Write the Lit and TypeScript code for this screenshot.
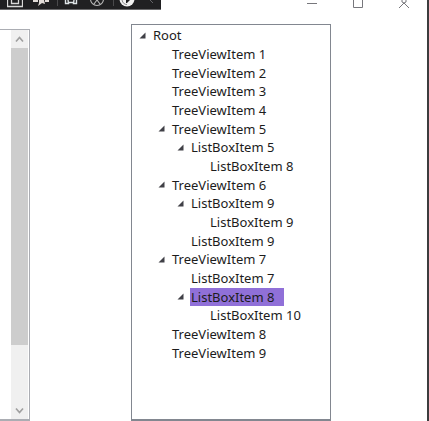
import { LitElement, html, svg, css, nothing } from "lit";
import { customElement, state } from "lit/decorators.js";
import { classMap } from "lit/directives/class-map.js";

interface TreeNode {
  label: string;
  level: number;
  open?: boolean;
}

const NODES: TreeNode[] = [
  { label: "Root", level: 0, open: true },
  { label: "TreeViewItem 1", level: 1 },
  { label: "TreeViewItem 2", level: 1 },
  { label: "TreeViewItem 3", level: 1 },
  { label: "TreeViewItem 4", level: 1 },
  { label: "TreeViewItem 5", level: 1, open: true },
  { label: "ListBoxItem 5", level: 2, open: true },
  { label: "ListBoxItem 8", level: 3 },
  { label: "TreeViewItem 6", level: 1, open: true },
  { label: "ListBoxItem 9", level: 2, open: true },
  { label: "ListBoxItem 9", level: 3 },
  { label: "ListBoxItem 9", level: 2 },
  { label: "TreeViewItem 7", level: 1, open: true },
  { label: "ListBoxItem 7", level: 2 },
  { label: "ListBoxItem 8", level: 2, open: true },
  { label: "ListBoxItem 10", level: 3 },
  { label: "TreeViewItem 8", level: 1 },
  { label: "TreeViewItem 9", level: 1 },
];

@customElement("tree-view")
export class TreeView extends LitElement {
  @state() private selected = 14;

  static styles = css`
    :host {
      display: block;
      box-sizing: border-box;
      border: 1px solid #828790;
      border-bottom-width: 2px;
      padding: 1px 2px 0;
      background: #fff;
    }
    .tree {
      display: grid;
      grid-auto-rows: 1fr;
      height: 336px;
      margin: 0;
      padding: 0;
      list-style: none;
    }
    .row {
      display: flex;
      align-items: center;
      min-height: 0;
    }
    .level-1 { padding-left: 19px; }
    .level-2 { padding-left: 38px; }
    .level-3 { padding-left: 57px; }
    .toggle, .blank {
      flex: none;
      width: 17px;
      height: 16px;
      margin-right: 1px;
    }
    .toggle {
      display: flex;
      align-items: center;
      justify-content: center;
      border: 0;
      padding: 0;
      background: none;
    }
    .label {
      border: 0;
      margin: 0;
      padding: 0 10px 0 1px;
      height: 18px;
      background: none;
      color: #1c1c1c;
      font: 13px/18px "Noto Sans", "Open Sans", sans-serif;
      white-space: nowrap;
    }
    .label.selected { background: #9070d8; }
  `;

  render() {
    return html`<ul class="tree" role="tree" aria-label="Items">
      ${NODES.map((n, i) => html`<li
        class="row level-${n.level}"
        role="treeitem"
        aria-level=${n.level + 1}
        aria-expanded=${n.open ? "true" : nothing}
        aria-selected=${i === this.selected}
      >
        ${n.open
          ? html`<button class="toggle" aria-label="Collapse ${n.label}">
              <svg width="7" height="7" viewBox="0 0 7 7"><path d="M6.5 .5V6.5H.5Z" fill="#404047" /></svg>
            </button>`
          : html`<span class="blank"></span>`}
        <button
          class=${classMap({ label: true, selected: i === this.selected })}
          @click=${() => (this.selected = i)}
        >${n.label}</button>
      </li>`)}
    </ul>`;
  }
}

@customElement("scroll-list")
export class ScrollList extends LitElement {
  static styles = css`
    :host {
      display: flex;
      justify-content: flex-end;
      box-sizing: border-box;
      border: 1px solid #abadb3;
      border-width: 1px 1px 2px 0;
      padding-right: 1px;
      background: #fff;
    }
    .bar {
      display: flex;
      flex-direction: column;
      width: 17px;
      background: #f0f0f0;
    }
    .arrow {
      display: flex;
      align-items: center;
      justify-content: center;
      flex: none;
      height: 18px;
      border: 0;
      padding: 0;
      background: none;
    }
    .track {
      display: flex;
      flex: 1;
      flex-direction: column;
    }
    .thumb { flex: 84; background: #cdcdcd; }
    .rest { flex: 16; }
  `;

  private arrow(d: string, label: string) {
    return html`<button class="arrow" aria-label=${label}>
      <svg width="9" height="7" viewBox="0 0 9 7"><path d=${d} fill="none" stroke="#a0a0a0" stroke-width="1.7" /></svg>
    </button>`;
  }

  render() {
    return html`<div class="bar">
      ${this.arrow("M1 5.5L4.5 1.5L8 5.5", "Scroll up")}
      <div class="track"><div class="thumb"></div><div class="rest"></div></div>
      ${this.arrow("M1 1.5L4.5 5.5L8 1.5", "Scroll down")}
    </div>`;
  }
}

const toolIcons = {
  select: svg`<path d="M.5 0V6.5H15.5V0M4.5 0V3.5H11.5V0" fill="none" stroke="#d8d8d8" stroke-width="1.3" />`,
  pin: svg`<path d="M0 0H5V2H0ZM12 0H16V2H12ZM6 0H11L12 4L9 3L5 6L6 3Z" fill="#e2dcd8" />`,
  frame: svg`<path d="M2.5 0V3.5H5.5L5 0M13.5 0V3.5H10.5L11 0M6 2.5H10" fill="none" stroke="#dfe5e8" stroke-width="1.4" />`,
  access: svg`<path d="M1.5 -1A6.5 6.5 0 0 0 14.5 -1M8 0L5 4M8 0L11 4" fill="none" stroke="#b8b8b8" stroke-width="1.1" />`,
  reload: svg`<circle cx="8" cy="-1" r="7.5" fill="#f0f0f0" /><path d="M3 0Q4 4.5 8 4.5" fill="none" stroke="#88888a" /><path d="M7 0H11L8 3H7Z" fill="#202022" />`,
};

@customElement("app-root")
export class AppRoot extends LitElement {
  static styles = css`
    :host {
      display: flex;
      flex-direction: column;
      box-sizing: border-box;
      min-height: 100vh;
      border-right: 2px solid #3c3c3e;
      background: #fff;
    }
    .top {
      display: flex;
      align-items: flex-start;
      justify-content: space-between;
      height: 24px;
      flex: none;
    }
    .tools {
      display: flex;
      box-sizing: border-box;
      width: 161px;
      height: 10px;
      padding-left: 7px;
      border-bottom: 1px solid #69696b;
      background: #202022;
      overflow: hidden;
    }
    .tool {
      display: block;
      flex: none;
      width: 16px;
      height: 9px;
      margin-right: 10px;
      border: 0;
      padding: 0;
      background: none;
    }
    .tool svg { display: block; }
    .split {
      flex: none;
      width: 1px;
      height: 6px;
      margin: 0 5px 0 -2px;
      background: #4a4a4c;
    }
    .window { display: flex; }
    .caption {
      display: flex;
      justify-content: center;
      width: 46px;
      height: 10px;
      border: 0;
      padding: 0;
      background: none;
    }
    .content {
      display: flex;
      flex: 1;
    }
    scroll-list {
      flex: none;
      width: 30px;
      margin-top: 5px;
    }
    tree-view {
      flex: 1;
      margin: 0 96px 0 101px;
    }
  `;

  private tool(icon: unknown, label: string) {
    return html`<button class="tool" aria-label=${label}>
      <svg width="16" height="9" viewBox="0 0 16 9">${icon}</svg>
    </button>`;
  }

  private caption(d: string, label: string) {
    return html`<button class="caption" aria-label=${label}>
      <svg width="10" height="9" viewBox="0 0 10 9"><path d=${d} fill="none" stroke="#77777c" /></svg>
    </button>`;
  }

  render() {
    return html`
      <header class="top">
        <div class="tools">
          ${this.tool(toolIcons.select, "Select element")}
          ${this.tool(toolIcons.pin, "Display layout adorners")}
          <span class="split"></span>
          ${this.tool(toolIcons.frame, "Track focused element")}
          ${this.tool(toolIcons.access, "Accessibility checker")}
          <span class="split"></span>
          ${this.tool(toolIcons.reload, "Hot reload")}
          <button class="tool" aria-label="Collapse toolbar">
            <svg width="16" height="9" viewBox="0 0 16 9"><path d="M5 0L8 3" stroke="#66666a" /></svg>
          </button>
        </div>
        <div class="window">
          ${this.caption("M0 3.5H10", "Minimize")}
          ${this.caption("M.5 0V7.5H9.5V0", "Maximize")}
          ${this.caption("M0 8L5 3L10 8M3 0V2L5 3L7 2V0", "Close")}
        </div>
      </header>
      <main class="content">
        <scroll-list></scroll-list>
        <tree-view></tree-view>
      </main>
    `;
  }
}
